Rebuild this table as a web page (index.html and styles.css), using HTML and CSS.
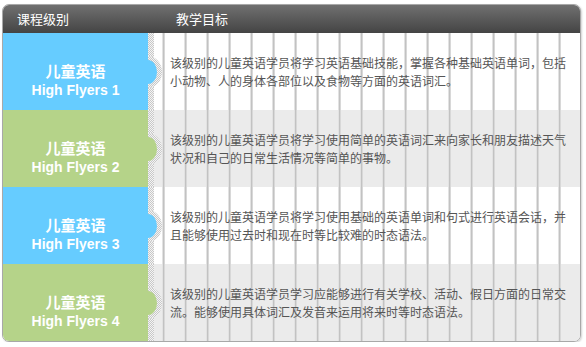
FILE: index.html
```html
<!DOCTYPE html>
<html lang="zh">
<head>
<meta charset="utf-8">
<title>课程级别</title>
<link rel="stylesheet" href="styles.css">
</head>
<body>
<div class="table">
  <div class="head">
    <div class="h-level">课程级别</div>
    <div class="h-desc">教学目标</div>
  </div>
  <div class="row odd">
    <div class="level blue"><div class="cn">儿童英语</div><div class="en">High Flyers 1</div></div>
    <div class="sep"></div>
    <div class="desc"><p>该级别的儿童英语学员将学习英语基础技能，掌握各种基础英语单词，包括小动物、人的身体各部位以及食物等方面的英语词汇。</p></div>
  </div>
  <div class="row even">
    <div class="level green"><div class="cn">儿童英语</div><div class="en">High Flyers 2</div></div>
    <div class="sep"></div>
    <div class="desc"><p>该级别的儿童英语学员将学习使用简单的英语词汇来向家长和朋友描述天气状况和自己的日常生活情况等简单的事物。</p></div>
  </div>
  <div class="row odd">
    <div class="level blue"><div class="cn">儿童英语</div><div class="en">High Flyers 3</div></div>
    <div class="sep"></div>
    <div class="desc"><p>该级别的儿童英语学员将学习使用基础的英语单词和句式进行英语会话，并且能够使用过去时和现在时等比较难的时态语法。</p></div>
  </div>
  <div class="row even">
    <div class="level green"><div class="cn">儿童英语</div><div class="en">High Flyers 4</div></div>
    <div class="sep"></div>
    <div class="desc"><p>该级别的儿童英语学员学习应能够进行有关学校、活动、假日方面的日常交流。能够使用具体词汇及发音来运用将来时等时态语法。</p></div>
  </div>
</div>
</body>
</html>
```
FILE: styles.css
```css
html, body {
  margin: 0;
  padding: 0;
  background: #fff;
}
body {
  font-family: "Noto Sans CJK SC", "Liberation Sans", sans-serif;
}
.table {
  box-sizing: border-box;
  width: 579px;
  margin: 4px 0 0 2px;
  border: 1px solid #a8a8a8;
  border-radius: 7px;
  overflow: hidden;
  box-shadow: 1px 1px 2px rgba(0, 0, 0, 0.18);
}
.head {
  display: flex;
  align-items: center;
  height: 28px;
  background: linear-gradient(to bottom, #707070 0%, #5a5a5a 50%, #444 100%);
  color: #fff;
  font-size: 13px;
  line-height: 28px;
}
.h-level {
  flex: 0 0 159px;
  box-sizing: border-box;
  padding-left: 14px;
}
.h-desc {
  padding-left: 14px;
}
.row {
  display: flex;
  height: 77px;
}
.level {
  position: relative;
  z-index: 2;
  flex: 0 0 145px;
  display: flex;
  flex-direction: column;
  align-items: center;
  padding-top: 28px;
  box-sizing: border-box;
  color: #fff;
  font-weight: bold;
}
.level::before {
  content: "";
  position: absolute;
  left: 100%;
  top: 23px;
  width: 14px;
  height: 32px;
  border-radius: 0 14px 14px 0 / 0 16px 16px 0;
  background-image: repeating-conic-gradient(#c8c8c8 0 25%, #f4f4f4 0 50%);
  background-size: 2px 2px;
}
.level::after {
  content: "";
  position: absolute;
  left: 100%;
  top: 27px;
  width: 9px;
  height: 24px;
  border-radius: 0 9px 9px 0 / 0 12px 12px 0;
  background: inherit;
}
.blue { background: #66ccff; }
.green { background: #b5d389; }
.cn {
  font-size: 15px;
  line-height: 20px;
}
.en {
  font-family: "Liberation Sans", Arial, sans-serif;
  font-size: 14px;
  line-height: 18px;
}
.sep {
  flex: 0 0 6px;
  background-image: repeating-conic-gradient(#c8c8c8 0 25%, #f4f4f4 0 50%);
  background-size: 2px 2px;
}
.desc {
  flex: 1;
  display: flex;
  align-items: center;
  padding: 0 12px 0 16px;
  background-image: linear-gradient(to right, #e2e2e2 0 1px, #c2c2c2 1px 2px, #d8d8d8 2px 3px, transparent 3px);
  background-size: 22px 100%;
  background-position: 8px 0;
  background-repeat: repeat-x;
}
.odd .desc { background-color: #fff; }
.even .desc { background-color: #ebebeb; }
.desc p {
  margin: 0;
  font-size: 12px;
  line-height: 18px;
  color: #555;
}
```
